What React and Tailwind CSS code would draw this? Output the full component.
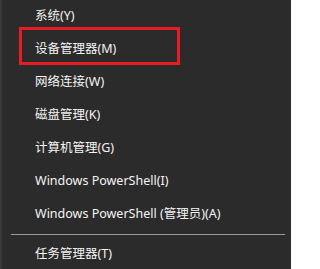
const items = [
  "系统(Y)",
  "设备管理器(M)",
  "网络连接(W)",
  "磁盘管理(K)",
  "计算机管理(G)",
  "Windows PowerShell(I)",
  "Windows PowerShell (管理员)(A)",
];

function Row({ label }) {
  return (
    <div className="h-[33px] flex items-center pl-[35px] text-[12.5px] text-[#f4f4f4] whitespace-nowrap">
      {label}
    </div>
  );
}

export default function App() {
  return (
    <div
      className="w-[291px] h-[269px] bg-[#2b2b2b] border-l-2 border-[#383838] overflow-hidden"
      style={{ fontFamily: '"Noto Sans", "Noto Sans CJK SC", sans-serif' }}
    >
      <div className="relative -ml-[2px]">
        {items.map((label) => (
          <Row key={label} label={label} />
        ))}
        <div className="absolute left-[19px] top-[27px] w-[161px] h-[38px] border-[3px] border-[#e81c25]" />
      </div>
      <div className="py-[3px] pl-[9px] pr-[6px]">
        <div className="h-px bg-[#9a9a9a]" />
      </div>
      <div className="-ml-[2px]">
        <Row label="任务管理器(T)" />
      </div>
    </div>
  );
}
